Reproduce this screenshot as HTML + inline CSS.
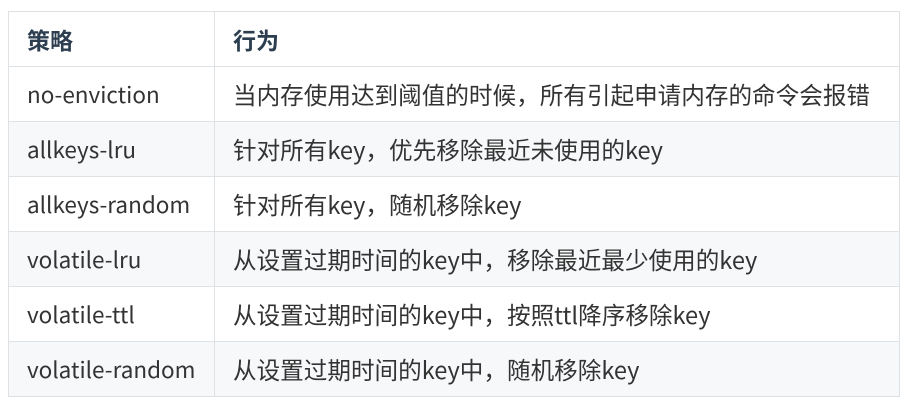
<!DOCTYPE html>
<html><head><meta charset="utf-8"><style>
body{margin:0;background:#fff;width:909px;height:408px;overflow:hidden;font-family:"Noto Sans CJK SC",sans-serif;color:#333;}
table{position:absolute;left:8px;top:11px;border-collapse:collapse;width:892px;}
td,th{border:1px solid #dfe2e5;height:55px;padding:0 0 0 18px;font-size:23.6px;line-height:26px;text-align:left;white-space:nowrap;vertical-align:middle;box-sizing:border-box;}
td:first-child{font-size:22.5px}
th{font-weight:bold;color:#2c3e50;font-size:23px}
tr:nth-child(2n+1) td{background:#f6f8fa;}
col.a{width:206px}
</style></head><body>
<table><colgroup><col class="a"><col></colgroup>
<tr><th>策略</th><th>行为</th></tr>
<tr><td>no-enviction</td><td>当内存使用达到阈值的时候，所有引起申请内存的命令会报错</td></tr>
<tr><td>allkeys-lru</td><td>针对所有key，优先移除最近未使用的key</td></tr>
<tr><td>allkeys-random</td><td>针对所有key，随机移除key</td></tr>
<tr><td>volatile-lru</td><td>从设置过期时间的key中，移除最近最少使用的key</td></tr>
<tr><td>volatile-ttl</td><td>从设置过期时间的key中，按照ttl降序移除key</td></tr>
<tr><td>volatile-random</td><td>从设置过期时间的key中，随机移除key</td></tr>
</table>
</body></html>
